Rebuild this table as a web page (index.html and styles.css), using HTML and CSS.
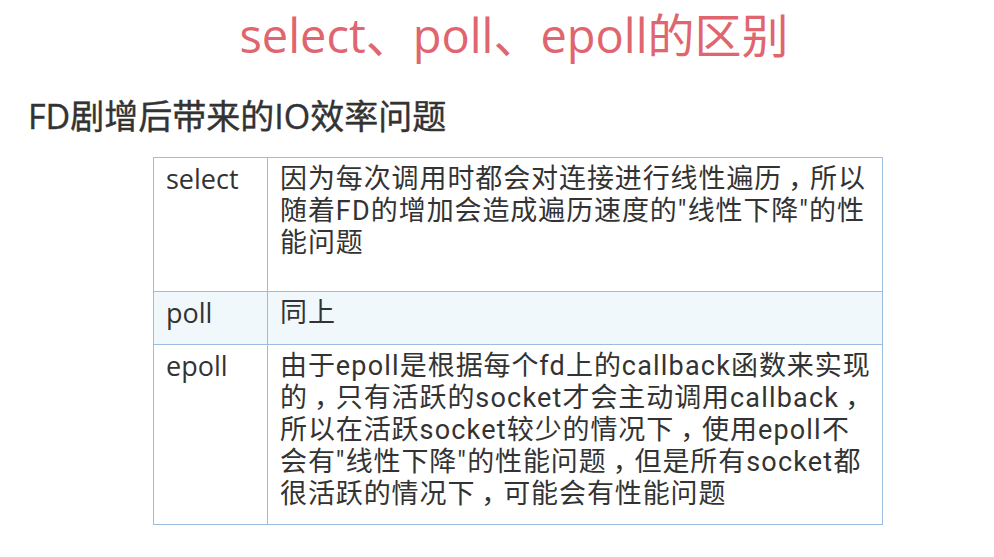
FILE: index.html
```html
<!DOCTYPE html>
<html lang="zh-CN">
<head>
<meta charset="utf-8">
<title>select、poll、epoll的区别</title>
<link rel="stylesheet" href="styles.css">
</head>
<body>
<div class="slide">
  <h1 class="title">select、poll、epoll的区别</h1>
  <h2 class="subtitle">FD剧增后带来的IO效率问题</h2>
  <table class="cmp">
    <tr class="r1">
      <td class="name">select</td>
      <td class="desc">因为每次调用时都会对连接进行线性遍历<span class="cm">，</span>所以<br>随着<span class="lt">FD</span>的增加会造成遍历速度的<span class="lt">"</span>线性下降<span class="lt">"</span>的性<br>能问题</td>
    </tr>
    <tr class="r2">
      <td class="name">poll</td>
      <td class="desc">同上</td>
    </tr>
    <tr class="r3">
      <td class="name">epoll</td>
      <td class="desc">由于<span class="lt">epoll</span>是根据每个<span class="lt">fd</span>上的<span class="lt">callback</span>函数来实现<br>的<span class="cm">，</span>只有活跃的<span class="lt">socket</span>才会主动调用<span class="lt">callback</span><span class="cm">，</span><br>所以在活跃<span class="lt">socket</span>较少的情况下<span class="cm">，</span>使用<span class="lt">epoll</span>不<br>会有<span class="lt">"</span>线性下降<span class="lt">"</span>的性能问题<span class="cm">，</span>但是所有<span class="lt">socket</span>都<br>很活跃的情况下<span class="cm">，</span>可能会有性能问题</td>
    </tr>
  </table>
</div>
</body>
</html>
```

FILE: styles.css
```css
html, body {
  margin: 0;
  padding: 0;
  background: #ffffff;
}
.slide {
  width: 994px;
  height: 557px;
  overflow: hidden;
  font-family: "Open Sans", "Noto Sans CJK SC", sans-serif;
  color: #333333;
}
.title {
  margin: 0;
  padding-top: 5px;
  text-align: center;
  font-weight: normal;
  font-size: 47px;
  line-height: 60px;
  color: #e0656f;
  padding-left: 34px;
}
.subtitle {
  margin: 31px 0 0 28px;
  font-weight: normal;
  font-size: 34px;
  line-height: 40px;
  color: #333333;
  -webkit-text-stroke: 0.4px #333333;
}
.cmp {
  margin: 21px 0 0 153px;
  width: 730px;
  border-collapse: collapse;
  table-layout: fixed;
}
.cmp td {
  border: 1.5px solid #9dbde0;
  vertical-align: top;
  font-size: 27px;
  line-height: 32px;
  padding: 5px 12px 0 12px;
  color: #333333;
}
.cmp td.name {
  width: 89px;
}
.cmp td.desc {
  font-family: Roboto, "Noto Sans CJK SC", sans-serif;
  white-space: nowrap;
  letter-spacing: 0.9px;
}
.lt {
  letter-spacing: 1.2px;
}
.r1 td { height: 128px; }
.r2 td { height: 47px; background: #f1f8fc; }
.r3 td { height: 174px; }
.cm {
  padding-left: 6px;
  letter-spacing: -5.1px;
}
```
